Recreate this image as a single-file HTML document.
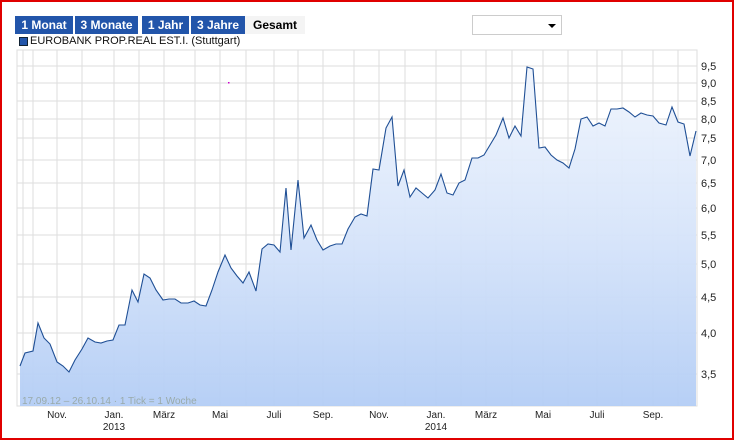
<!DOCTYPE html>
<html><head><meta charset="utf-8"><style>
html,body{margin:0;padding:0}
body{width:734px;height:440px;position:relative;overflow:hidden;background:#fff;font-family:"Liberation Sans",sans-serif}
.frame{position:absolute;left:0;top:0;width:730px;height:436px;border:2px solid #e00000}
.btn{position:absolute;top:16px;height:18px;line-height:18px;font-weight:bold;color:#fff;background:#2255aa;font-family:"Liberation Sans",sans-serif;font-size:12px;text-align:center}
.sel{position:absolute;left:472px;top:15px;width:88px;height:18px;border:1px solid #ccc;background:#fff}
</style></head><body>
<div class="frame"></div>
<div class="btn" style="left:15px;width:58px">1 Monat</div>
<div class="btn" style="left:75px;width:63px">3 Monate</div>
<div class="btn" style="left:142px;width:47px">1 Jahr</div>
<div class="btn" style="left:191px;width:54px">3 Jahre</div>
<div class="btn" style="left:245px;width:60px;background:#f4f4f4;color:#000">Gesamt</div>
<div class="sel"><svg width="88" height="18" style="position:absolute;left:0;top:0"><path d="M75 8h8l-4 4z" fill="#000"/></svg></div>
<div style="position:absolute;left:19px;top:37px;width:7px;height:7px;background:#2255aa;border:1px solid #123"></div>
<div style="position:absolute;left:30px;top:35px;font-size:11px;color:#111">EUROBANK PROP.REAL EST.I. (Stuttgart)</div>
<svg width="734" height="440" style="position:absolute;left:0;top:0" font-family="Liberation Sans, sans-serif">
<defs><linearGradient id="g" x1="0" y1="0" x2="0" y2="1"><stop offset="0" stop-color="#f0f5fd"/><stop offset="0.5" stop-color="#d6e4fa"/><stop offset="1" stop-color="#b3cdf5"/></linearGradient></defs>
<rect x="17" y="50" width="680" height="356" fill="#fff" stroke="#ddd"/>
<g stroke="#ddd" stroke-width="1">
<line x1="17" y1="66" x2="697" y2="66"/><line x1="17" y1="83" x2="697" y2="83"/><line x1="17" y1="101" x2="697" y2="101"/><line x1="17" y1="119" x2="697" y2="119"/><line x1="17" y1="138" x2="697" y2="138"/><line x1="17" y1="160" x2="697" y2="160"/><line x1="17" y1="183" x2="697" y2="183"/><line x1="17" y1="208" x2="697" y2="208"/><line x1="17" y1="235" x2="697" y2="235"/><line x1="17" y1="264" x2="697" y2="264"/><line x1="17" y1="297" x2="697" y2="297"/><line x1="17" y1="333" x2="697" y2="333"/><line x1="17" y1="374" x2="697" y2="374"/>
<line x1="23" y1="50" x2="23" y2="406"/><line x1="33" y1="50" x2="33" y2="406"/><line x1="57" y1="50" x2="57" y2="406"/><line x1="82" y1="50" x2="82" y2="406"/><line x1="114" y1="50" x2="114" y2="406"/><line x1="139" y1="50" x2="139" y2="406"/><line x1="164" y1="50" x2="164" y2="406"/><line x1="195" y1="50" x2="195" y2="406"/><line x1="220" y1="50" x2="220" y2="406"/><line x1="246" y1="50" x2="246" y2="406"/><line x1="274" y1="50" x2="274" y2="406"/><line x1="298" y1="50" x2="298" y2="406"/><line x1="323" y1="50" x2="323" y2="406"/><line x1="354" y1="50" x2="354" y2="406"/><line x1="379" y1="50" x2="379" y2="406"/><line x1="405" y1="50" x2="405" y2="406"/><line x1="436" y1="50" x2="436" y2="406"/><line x1="461" y1="50" x2="461" y2="406"/><line x1="486" y1="50" x2="486" y2="406"/><line x1="512" y1="50" x2="512" y2="406"/><line x1="543" y1="50" x2="543" y2="406"/><line x1="568" y1="50" x2="568" y2="406"/><line x1="597" y1="50" x2="597" y2="406"/><line x1="622" y1="50" x2="622" y2="406"/><line x1="653" y1="50" x2="653" y2="406"/><line x1="678" y1="50" x2="678" y2="406"/>
</g>
<polygon fill="url(#g)" fill-opacity="0.95" points="20,406 20,366 25,353 33,351 38,323 44,338 50,344 57,362 63,366 69,372 75,360 82,349 88,338 95,342 101,343 107,341 113,340 119,325 125,325 132,290 138,302 144,274 150,278 156,290 163,300 169,299 175,299 181,303 188,303 194,301 200,305 206,306 212,290 218,272 225,255 231,268 237,276 243,283 249,272 256,291 262,249 268,244 274,245 280,252 286,188 291,250 298,180 304,238 311,225 317,240 323,250 330,246 336,244 342,244 348,229 355,217 361,214 367,216 373,169 379,170 386,128 392,117 398,186 404,170 410,197 416,188 422,193 428,198 435,190 441,174 447,193 453,195 459,183 465,180 472,158 478,158 484,155 490,145 496,135 503,118 509,138 515,126 521,136 527,67 533,69 539,148 545,147 551,155 557,160 563,163 569,168 575,149 581,119 587,117 593,126 599,123 605,126 611,109 617,109 623,108 629,112 635,117 641,113 647,115 653,116 659,123 666,125 672,107 678,122 684,124 690,156 696,131 696,406"/>
<polyline fill="none" stroke="#1f4f95" stroke-width="1.1" points="20,366 25,353 33,351 38,323 44,338 50,344 57,362 63,366 69,372 75,360 82,349 88,338 95,342 101,343 107,341 113,340 119,325 125,325 132,290 138,302 144,274 150,278 156,290 163,300 169,299 175,299 181,303 188,303 194,301 200,305 206,306 212,290 218,272 225,255 231,268 237,276 243,283 249,272 256,291 262,249 268,244 274,245 280,252 286,188 291,250 298,180 304,238 311,225 317,240 323,250 330,246 336,244 342,244 348,229 355,217 361,214 367,216 373,169 379,170 386,128 392,117 398,186 404,170 410,197 416,188 422,193 428,198 435,190 441,174 447,193 453,195 459,183 465,180 472,158 478,158 484,155 490,145 496,135 503,118 509,138 515,126 521,136 527,67 533,69 539,148 545,147 551,155 557,160 563,163 569,168 575,149 581,119 587,117 593,126 599,123 605,126 611,109 617,109 623,108 629,112 635,117 641,113 647,115 653,116 659,123 666,125 672,107 678,122 684,124 690,156 696,131"/>
<rect x="228" y="82" width="1.5" height="1.5" fill="#c0c"/>
<text x="22" y="404" font-size="10" fill="#9aa">17.09.12 – 26.10.14 · 1 Tick = 1 Woche</text>
<g font-size="11" fill="#222">
<text x="701" y="70">9,5</text><text x="701" y="87">9,0</text><text x="701" y="105">8,5</text><text x="701" y="123">8,0</text><text x="701" y="142">7,5</text><text x="701" y="164">7,0</text><text x="701" y="187">6,5</text><text x="701" y="212">6,0</text><text x="701" y="239">5,5</text><text x="701" y="268">5,0</text><text x="701" y="301">4,5</text><text x="701" y="337">4,0</text><text x="701" y="378">3,5</text>
</g>
<g font-size="10" fill="#222" text-anchor="middle">
<text x="57" y="418">Nov.</text><text x="114" y="418">Jan.</text><text x="114" y="430">2013</text><text x="164" y="418">März</text><text x="220" y="418">Mai</text><text x="274" y="418">Juli</text><text x="323" y="418">Sep.</text><text x="379" y="418">Nov.</text><text x="436" y="418">Jan.</text><text x="436" y="430">2014</text><text x="486" y="418">März</text><text x="543" y="418">Mai</text><text x="597" y="418">Juli</text><text x="653" y="418">Sep.</text>
</g>
</svg>
</body></html>
